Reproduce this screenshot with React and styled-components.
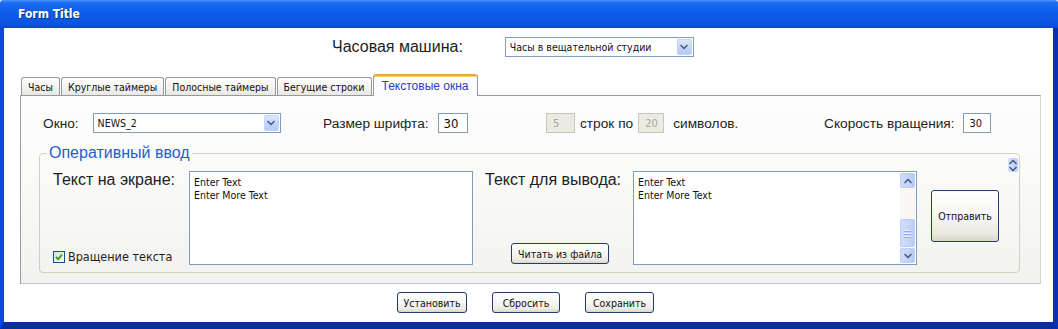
import React from "react";
import styled, { createGlobalStyle } from "styled-components";

const GlobalStyle = createGlobalStyle`
  html, body {
    margin: 0;
    padding: 0;
    background: #fff;
  }
  body {
    font-family: "Liberation Sans", Arial, sans-serif;
    color: #1a1a1a;
  }
`;

const tahoma = `"DejaVu Sans Condensed", "DejaVu Sans", sans-serif`;

const Window = styled.div`
  width: 1058px;
  height: 329px;
  display: flex;
  flex-direction: column;
`;

const TitleBar = styled.div`
  height: 28px;
  flex: none;
  display: flex;
  align-items: center;
  padding-left: 18px;
  border-radius: 3px 3px 0 0;
  background: linear-gradient(180deg, #4a96fa 0%, #1c6cf3 10%, #0c5ce9 45%, #0a56e2 85%, #0849cc 100%);
  color: #fff;
  font-family: ${tahoma};
  font-weight: bold;
  font-size: 12px;
  text-shadow: 1px 1px 0 #0a318f;
`;

const Frame = styled.div`
  flex: 1;
  display: flex;
  flex-direction: column;
  background: #fff;
  border-left: 4px solid #0b49de;
  border-right: 5px solid #0a2fb3;
  border-bottom: 7px solid #0a2ca4;
`;

const MachineRow = styled.div`
  display: flex;
  align-items: center;
  gap: 42px;
  height: 20px;
  padding: 9px 0 0 328px;
`;

const BigLabel = styled.span`
  font-size: ${(p) => p.$size || 16}px;
  line-height: 18px;
  color: #1e1e1e;
  white-space: nowrap;
`;

const Label = styled.span`
  font-size: 13.7px;
  color: #1e1e1e;
  white-space: nowrap;
`;

const Select = styled.div`
  width: ${(p) => p.$w}px;
  height: 20px;
  box-sizing: border-box;
  border: 1px solid #7f9db9;
  background: #fff;
  display: flex;
  align-items: center;
  padding: 1px;
`;

const SelectText = styled.span`
  flex: 1;
  padding-left: 3px;
  font-family: ${tahoma};
  font-size: 10.5px;
  line-height: 16px;
  color: #111;
  white-space: nowrap;
`;

const ArrowBtn = styled.span`
  width: 15px;
  height: 16px;
  box-sizing: border-box;
  border-radius: 2px;
  border: 1px solid #c3d3fd;
  background: linear-gradient(180deg, #dae5fd 0%, #c3d4fb 60%, #b5c8f6 100%);
  display: flex;
  align-items: center;
  justify-content: center;
`;

const Chevron = ({ dir = "down", color = "#4d6185" }) => (
  <svg width="8" height="6" viewBox="0 0 8 6">
    <path
      d={dir === "down" ? "M1 1.5 L4 4.5 L7 1.5" : "M1 4.5 L4 1.5 L7 4.5"}
      fill="none"
      stroke={color}
      strokeWidth="1.7"
      strokeLinecap="round"
      strokeLinejoin="round"
    />
  </svg>
);

const TabStrip = styled.div`
  display: flex;
  align-items: flex-end;
  gap: 1px;
  margin-top: 17px;
  padding-left: 17px;
  position: relative;
  z-index: 1;
`;

const Tab = styled.div`
  box-sizing: border-box;
  height: ${(p) => (p.$active ? 22 : 18)}px;
  margin-bottom: ${(p) => (p.$active ? -1 : 0)}px;
  padding: 0 ${(p) => (p.$active ? 8 : 6)}px;
  display: flex;
  align-items: center;
  border: 1px solid #919b9c;
  border-bottom: none;
  border-top: ${(p) => (p.$active ? "2px solid #eea53d" : "1px solid #919b9c")};
  border-radius: 3px 3px 0 0;
  box-shadow: ${(p) => (p.$active ? "inset 0 1px 0 #ffd27a" : "none")};
  background: ${(p) =>
    p.$active ? "#fcfcfe" : "linear-gradient(180deg, #ffffff 0%, #f4f3ef 55%, #e8e7e2 100%)"};
  font-family: ${(p) => (p.$active ? `"Liberation Sans", Arial, sans-serif` : tahoma)};
  font-size: ${(p) => (p.$active ? 12 : 10.5)}px;
  color: ${(p) => (p.$active ? "#2f3dbf" : "#111")};
  white-space: nowrap;
`;

const Panel = styled.div`
  margin: 0 12px 0 16px;
  padding: 17px 0 10px;
  border: 1px solid #919b9c;
  border-left-color: #9a9a9a;
  border-right-color: #d2d2d2;
  border-bottom-color: #c6c6c6;
  background: linear-gradient(180deg, #fdfdfd 0%, #fafaf9 40%, #f2f2ef 100%);
`;

const ParamRow = styled.div`
  display: flex;
  align-items: center;
  height: 20px;
  padding-left: 22px;
`;

const Group = styled.div`
  flex: none;
  width: ${(p) => (p.$w ? `${p.$w}px` : "auto")};
  display: flex;
  align-items: center;
  gap: ${(p) => p.$gap}px;
`;

const Input = styled.div`
  width: ${(p) => p.$w}px;
  height: 20px;
  box-sizing: border-box;
  border: 1px solid ${(p) => (p.$disabled ? "#c9c7ba" : "#7f9db9")};
  background: ${(p) => (p.$disabled ? "#ebeae3" : "#fff")};
  color: ${(p) => (p.$disabled ? "#aca899" : "#111")};
  font-family: ${tahoma};
  font-size: ${(p) => p.$size || 11}px;
  display: flex;
  align-items: center;
  padding-left: ${(p) => (p.$size > 11 ? 5 : 6)}px;
`;

const GroupBox = styled.fieldset`
  margin: 12px 20px 0 18px;
  padding: 10px 1px 7px 0;
  border: 1px solid #d0d0bf;
  border-radius: 4px;
  min-width: 0;
`;

const Legend = styled.legend`
  margin-left: 7px;
  padding: 0 2px;
  font-size: 16px;
  line-height: 16px;
  color: #1f5fcf;
`;

const InputRow = styled.div`
  display: flex;
  height: 94px;
  padding-left: 11px;
`;

const SideCol = styled.div`
  flex: none;
  width: ${(p) => p.$w}px;
  box-sizing: border-box;
  padding-left: ${(p) => p.$pad || 0}px;
  display: flex;
  flex-direction: column;
  justify-content: space-between;
  align-items: flex-start;
`;

const TextBox = styled.div`
  flex: none;
  width: 284px;
  box-sizing: border-box;
  border: 1px solid #7f9db9;
  background: #fff;
  display: flex;
  padding: 1px;
`;

const TextContent = styled.div`
  flex: 1;
  padding: 3px 3px;
  font-family: ${tahoma};
  font-size: 10.5px;
  line-height: 13px;
  color: #111;
  white-space: pre-line;
`;

const ScrollBar = styled.div`
  width: 15px;
  display: flex;
  flex-direction: column;
  background: #f8f7f4;
`;

const ScrollBtn = styled.div`
  height: 15px;
  flex: none;
  box-sizing: border-box;
  border: 1px solid #bccdf6;
  border-radius: 2px;
  background: linear-gradient(90deg, #cedcfd 0%, #c2d3fb 60%, #b6c9f7 100%);
  display: flex;
  align-items: center;
  justify-content: center;
`;

const Track = styled.div`
  flex: 1;
  display: flex;
  flex-direction: column;
  justify-content: flex-end;
  padding-bottom: 1px;
`;

const Thumb = styled.div`
  height: 28px;
  box-sizing: border-box;
  border: 1px solid #bccdf6;
  border-radius: 2px;
  background: linear-gradient(90deg, #cfdcfd 0%, #c4d4fb 60%, #b9cbf7 100%);
  display: flex;
  flex-direction: column;
  align-items: center;
  justify-content: center;
  gap: 2px;
`;

const Grip = styled.span`
  width: 7px;
  height: 1px;
  background: #eef3ff;
  box-shadow: 0 1px 0 #8fa8e0;
`;

const Check = styled.span`
  width: 12px;
  height: 12px;
  box-sizing: border-box;
  border: 1px solid #1c5180;
  background: linear-gradient(135deg, #dcdcd7 0%, #fbfbf9 100%);
  display: inline-flex;
  align-items: center;
  justify-content: center;
`;

const CheckRow = styled.label`
  display: flex;
  align-items: center;
  gap: 3px;
  margin-bottom: 1px;
  font-family: ${tahoma};
  font-size: 12.5px;
  color: #1e1e1e;
  white-space: nowrap;
`;

const Button = styled.button`
  box-sizing: border-box;
  height: ${(p) => p.$h || 21}px;
  width: ${(p) => p.$w}px;
  padding: 0;
  border: 1px solid #1d3e6e;
  border-radius: 3px;
  background: linear-gradient(180deg, #ffffff 0%, #f6f6f3 50%, #ebe9e2 85%, #d8d5cb 100%);
  font-family: ${tahoma};
  font-size: 10.5px;
  color: #111;
  white-space: nowrap;
`;

const Spinner = styled.div`
  flex: none;
  width: 10px;
  height: 14px;
  margin: -13px 0 0 9px;
  border-radius: 2px;
  background: linear-gradient(90deg, #d5e1fd, #bccff9);
  display: flex;
  flex-direction: column;
  align-items: center;
  justify-content: center;
  gap: 1px;
`;

const Footer = styled.div`
  display: flex;
  justify-content: center;
  gap: 25px;
  margin-top: 8px;
  padding-right: 6px;
`;

const tabs = ["Часы", "Круглые таймеры", "Полосные таймеры", "Бегущие строки", "Текстовые окна"];

export default function App() {
  return (
    <>
      <GlobalStyle />
      <Window>
        <TitleBar>Form Title</TitleBar>
        <Frame>
          <MachineRow>
            <BigLabel>Часовая машина:</BigLabel>
            <Select $w={189}>
              <SelectText>Часы в вещательной студии</SelectText>
              <ArrowBtn>
                <Chevron />
              </ArrowBtn>
            </Select>
          </MachineRow>

          <TabStrip>
            {tabs.map((t, i) => (
              <Tab key={t} $active={i === tabs.length - 1}>
                {t}
              </Tab>
            ))}
          </TabStrip>

          <Panel>
            <ParamRow>
              <Group $w={280} $gap={14}>
                <Label>Окно:</Label>
                <Select $w={188}>
                  <SelectText>NEWS_2</SelectText>
                  <ArrowBtn>
                    <Chevron />
                  </ArrowBtn>
                </Select>
              </Group>
              <Group $w={223} $gap={9}>
                <Label>Размер шрифта:</Label>
                <Input $w={30} $size={13}>30</Input>
              </Group>
              <Group $w={278} $gap={5}>
                <Input $w={29} $disabled>5</Input>
                <Label>строк по</Label>
                <Input $w={26} $disabled>20</Input>
                <Label style={{ marginLeft: 4 }}>символов.</Label>
              </Group>
              <Group $gap={8}>
                <Label>Скорость вращения:</Label>
                <Input $w={28}>30</Input>
              </Group>
            </ParamRow>

            <GroupBox>
              <Legend>Оперативный ввод</Legend>
              <InputRow>
                <SideCol $w={138} $pad={2}>
                  <BigLabel>Текст на экране:</BigLabel>
                  <CheckRow>
                    <Check>
                      <svg width="8" height="8" viewBox="0 0 8 8">
                        <path d="M1 4 L3.2 6.2 L7 1.6" fill="none" stroke="#21a121" strokeWidth="1.8" />
                      </svg>
                    </Check>
                    Вращение текста
                  </CheckRow>
                </SideCol>
                <TextBox>
                  <TextContent>{"Enter Text\nEnter More Text"}</TextContent>
                </TextBox>
                <SideCol $w={160} $pad={12}>
                  <BigLabel>Текст для вывода:</BigLabel>
                  <Button $w={98} style={{ marginLeft: 26, marginBottom: 1 }}>
                    Читать из файла
                  </Button>
                </SideCol>
                <TextBox>
                  <TextContent>{"Enter Text\nEnter More Text"}</TextContent>
                  <ScrollBar>
                    <ScrollBtn>
                      <Chevron dir="up" />
                    </ScrollBtn>
                    <Track>
                      <Thumb>
                        <Grip />
                        <Grip />
                        <Grip />
                      </Thumb>
                    </Track>
                    <ScrollBtn>
                      <Chevron />
                    </ScrollBtn>
                  </ScrollBar>
                </TextBox>
                <Button $w={68} $h={52} style={{ marginLeft: 14, marginTop: 19 }}>
                  Отправить
                </Button>
                <Spinner>
                  <Chevron dir="up" />
                  <Chevron />
                </Spinner>
              </InputRow>
            </GroupBox>
          </Panel>

          <Footer>
            <Button $w={70}>Установить</Button>
            <Button $w={68}>Сбросить</Button>
            <Button $w={69}>Сохранить</Button>
          </Footer>
        </Frame>
      </Window>
    </>
  );
}
